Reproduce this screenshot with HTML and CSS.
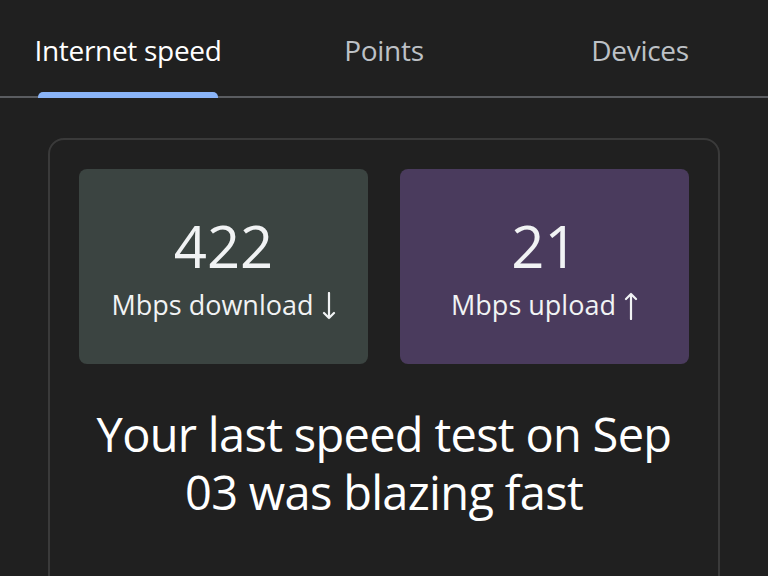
FILE: index.html
```html
<!DOCTYPE html>
<html>
<head>
<meta charset="utf-8">
<link rel="stylesheet" href="styles.css">
</head>
<body>
<nav class="tabs">
  <div class="tab active"><span class="label">Internet speed</span><span class="indicator"></span></div>
  <div class="tab"><span class="label">Points</span></div>
  <div class="tab"><span class="label">Devices</span></div>
</nav>
<main class="card">
  <div class="tiles">
    <div class="tile down">
      <div class="num">422</div>
      <div class="unit">Mbps download <svg class="arrow" viewBox="0 0 14 28" width="14" height="28"><path d="M7 1 V26 M2 21 L7 26 L12 21" fill="none" stroke="currentColor" stroke-width="2.2" stroke-linecap="round" stroke-linejoin="round"/></svg></div>
    </div>
    <div class="tile up">
      <div class="num">21</div>
      <div class="unit">Mbps upload <svg class="arrow" viewBox="0 0 14 28" width="14" height="28"><path d="M7 27 V2 M2 7 L7 2 L12 7" fill="none" stroke="currentColor" stroke-width="2.2" stroke-linecap="round" stroke-linejoin="round"/></svg></div>
    </div>
  </div>
  <p class="summary">Your last speed test on Sep 03 was blazing fast</p>
</main>
</body>
</html>
```

FILE: styles.css
```css
html, body {
  margin: 0;
  padding: 0;
  background: #202020;
  height: 576px;
  overflow: hidden;
  font-family: "Open Sans", Roboto, sans-serif;
  color: #e8eaed;
}
.tabs {
  display: grid;
  grid-template-columns: repeat(3, 1fr);
  height: 96px;
  border-bottom: 2px solid #5a5c60;
}
.tab {
  position: relative;
  display: flex;
  justify-content: center;
  padding-top: 31px;
}
.label {
  font-size: 28px;
  line-height: 38px;
  color: #bdc1c6;
  letter-spacing: -0.3px;
}
.tab.active .label { color: #ffffff; }
.indicator {
  position: absolute;
  bottom: -2px;
  left: 38px;
  width: 180px;
  height: 6px;
  background: #8ab4f8;
  border-radius: 5px 5px 0 0;
}
.card {
  margin: 40px 48px 0 48px;
  border: 2px solid #3a3a3a;
  border-radius: 16px;
  height: 600px;
  padding: 29px 29px 0 29px;
}
.tiles {
  display: grid;
  grid-template-columns: 1fr 1fr;
  gap: 32px;
}
.tile {
  height: 195px;
  border-radius: 8px;
  display: flex;
  flex-direction: column;
  align-items: center;
  justify-content: center;
  color: #f1f3f4;
}
.tile.down { background: #3b4441; }
.tile.up { background: #4a3b5d; }
.num {
  font-size: 58px;
  line-height: 66px;
  margin-top: 2px;
}
.unit {
  display: flex;
  align-items: center;
  gap: 8px;
  font-size: 27px;
  line-height: 36px;
  margin-top: 8px;
}
.arrow { display: block; margin-top: 2px; }
.summary {
  margin: 41px 14px 0 14px;
  text-align: center;
  font-size: 47px;
  line-height: 58px;
  color: #ffffff;
  letter-spacing: -0.7px;
}
```
